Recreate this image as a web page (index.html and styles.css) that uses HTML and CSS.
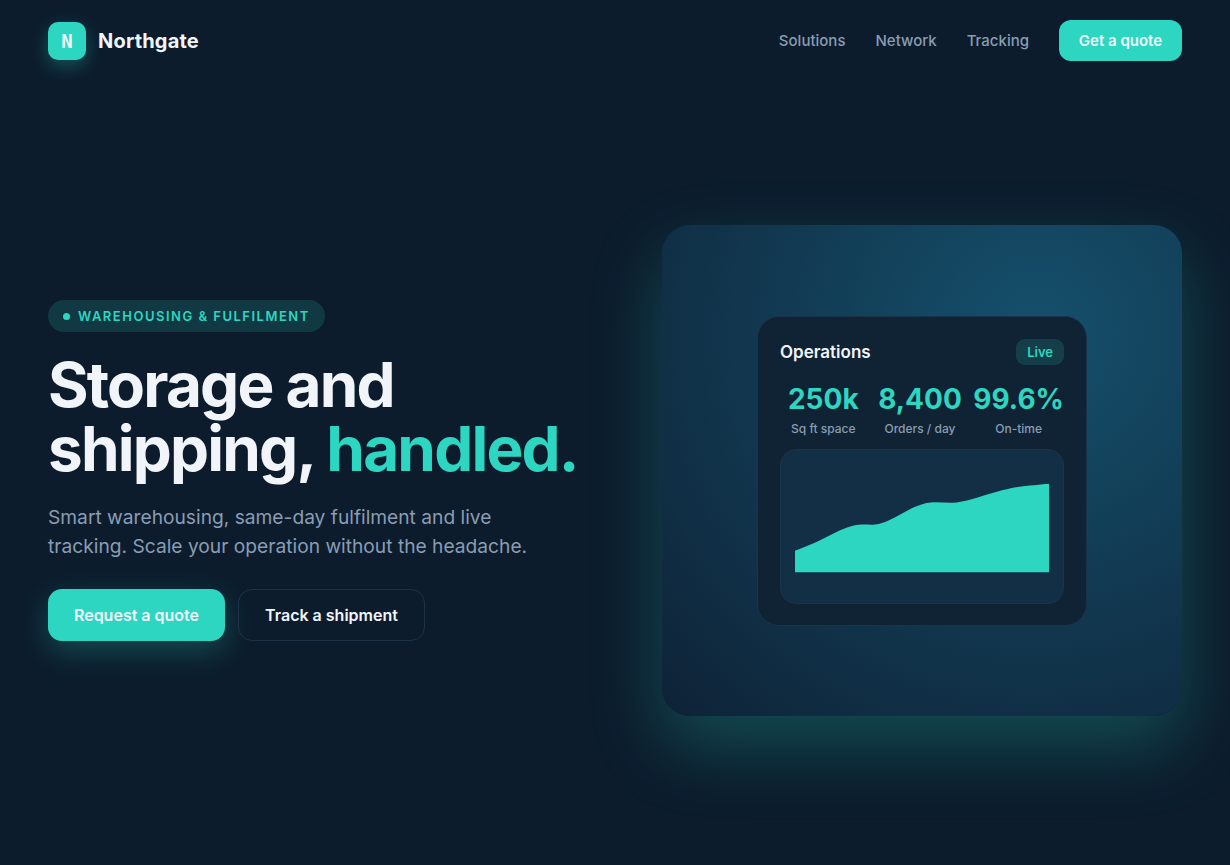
FILE: index.html
```html
<!DOCTYPE html>
<html lang="en">
<head>
  <meta charset="UTF-8" />
  <meta name="viewport" content="width=device-width, initial-scale=1.0"/>
  <title>Northgate - Warehousing &amp; Fulfilment</title>
  <link rel="stylesheet" href="styles.css">
</head>
<body>

<nav class="nav">
  <a href="#" class="brand">
    <span class="brand-mark">N</span>
    <span class="brand-name">Northgate</span>
  </a>
  <div class="nav-links">
    <a href="#" class="nav-link">Solutions</a>
    <a href="#" class="nav-link">Network</a>
    <a href="#" class="nav-link">Tracking</a>
    <a href="#" class="nav-cta">Get a quote</a>
  </div>
</nav>

<main class="hero">
  <section class="hero-copy">
    <div class="eyebrow"><span class="eyebrow-dot"></span>WAREHOUSING &amp; FULFILMENT</div>
    <h1 class="headline">Storage and<br>shipping, <span class="accent">handled.</span></h1>
    <p class="lead">Smart warehousing, same-day fulfilment and live<br>tracking. Scale your operation without the headache.</p>
    <div class="actions">
      <a href="#" class="btn btn-primary">Request a quote</a>
      <a href="#" class="btn btn-ghost">Track a shipment</a>
    </div>
  </section>

  <section class="panel">
    <div class="card">
      <div class="card-head">
        <span class="card-title">Operations</span>
        <span class="live">Live</span>
      </div>
      <div class="stats">
        <div class="stat">
          <div class="stat-value">250k</div>
          <div class="stat-label">Sq ft space</div>
        </div>
        <div class="stat">
          <div class="stat-value">8,400</div>
          <div class="stat-label">Orders / day</div>
        </div>
        <div class="stat">
          <div class="stat-value">99.6%</div>
          <div class="stat-label">On-time</div>
        </div>
      </div>
      <div class="chart">
        <svg class="chart-svg" viewBox="0 0 254 125" width="254" height="125">
          <path d="M0 86.7 C8 83.5 15 81 22 77.7 C32 73 42 67 52 63.5 C58 61.5 62 60.8 67 60.6 C72 60.4 76 60.9 80 60.5 C85 60 89 58.5 93 56.8 C102 52.8 110 47.5 119 43.2 C124 41 130 38.8 136 38.4 C143 37.9 151 39 158 38.7 C163 38.4 168 37.4 173 36.2 C185 33 196 29 208 26 C215 24.3 221 23 228 22.3 C237 21.3 246 20.3 254 19.7 L254 108.3 L0 108.3 Z" fill="#2dd6c1"/>
        </svg>
      </div>
    </div>
  </section>
</main>

</body>
</html>
```

FILE: styles.css
```css
* {
  margin: 0; padding: 0; box-sizing: border-box;
}

body {
  font-family: 'Inter', 'Liberation Sans', sans-serif;
  background: #0c1c2d;
  min-height: 100vh;
  color: #f1f5f9;
  overflow: hidden;
}

a {
  text-decoration: none;
}

.nav {
  display: flex;
  align-items: center;
  justify-content: space-between;
  height: 81px;
  padding: 0 48px;
}

.brand {
  display: flex;
  align-items: center;
  gap: 12px;
}

.brand-mark {
  display: flex;
  align-items: center;
  justify-content: center;
  width: 38px;
  height: 38px;
  border-radius: 10px;
  background: #2dd6c1;
  box-shadow: 0 6px 18px rgba(45, 214, 193, 0.3);
  color: #f1f5f9;
  font-family: 'DejaVu Sans Mono', monospace;
  font-size: 19px;
  font-weight: 700;
}

.brand-name {
  color: #f1f5f9;
  font-size: 20px;
  font-weight: 700;
  letter-spacing: 0.2px;
}

.nav-links {
  display: flex;
  align-items: center;
  gap: 30px;
}

.nav-link {
  color: #8a9db3;
  font-size: 15px;
  font-weight: 500;
}

.nav-cta {
  display: flex;
  align-items: center;
  justify-content: center;
  width: 123px;
  height: 41px;
  border-radius: 12px;
  background: #2dd6c1;
  color: #f1f5f9;
  font-size: 15px;
  font-weight: 600;
}

.hero {
  display: grid;
  grid-template-columns: 1fr 520px;
  gap: 48px;
  align-items: center;
  height: 779px;
  padding: 0 48px;
}

.eyebrow {
  display: inline-flex;
  align-items: center;
  gap: 8px;
  height: 32px;
  padding: 0 15px;
  border-radius: 16px;
  background: rgba(45, 214, 193, 0.16);
  color: #2dd6c1;
  font-size: 13px;
  font-weight: 600;
  letter-spacing: 1.5px;
}

.eyebrow-dot {
  width: 7px;
  height: 7px;
  border-radius: 50%;
  background: #2dd6c1;
}

.headline {
  margin-top: 21px;
  font-size: 62px;
  font-weight: 700;
  line-height: 64px;
  letter-spacing: -1.8px;
}

.accent {
  color: #2dd6c1;
}

.lead {
  margin-top: 22px;
  color: #8a9db3;
  font-size: 19.2px;
  line-height: 29px;
}

.actions {
  display: flex;
  gap: 13px;
  margin-top: 28px;
}

.btn {
  display: flex;
  align-items: center;
  justify-content: center;
  height: 52px;
  border-radius: 14px;
  color: #f1f5f9;
  font-size: 16px;
  font-weight: 600;
}

.btn-primary {
  width: 177px;
  background: #2dd6c1;
  box-shadow: 0 10px 30px rgba(45, 214, 193, 0.25);
}

.btn-ghost {
  width: 187px;
  border: 1px solid #1e3247;
}

.panel {
  display: flex;
  align-items: center;
  justify-content: center;
  height: 491px;
  border-radius: 28px;
  background: radial-gradient(circle at 72% 22%, #15506c 0%, #0e2236 100%);
  box-shadow: 0 30px 70px rgba(45, 214, 193, 0.25);
}

.card {
  width: 330px;
  height: 310px;
  padding: 22px;
  border: 1px solid #1b3348;
  border-radius: 22px;
  background: #102334;
}

.card-head {
  display: flex;
  align-items: center;
  justify-content: space-between;
  height: 26px;
}

.card-title {
  font-size: 17px;
  font-weight: 600;
}

.live {
  display: flex;
  align-items: center;
  height: 26px;
  padding: 0 11px;
  border-radius: 9px;
  background: rgba(45, 214, 193, 0.16);
  color: #2dd6c1;
  font-size: 13px;
  font-weight: 600;
}

.stats {
  display: grid;
  grid-template-columns: repeat(3, 1fr);
  gap: 10px;
  margin-top: 17px;
  text-align: center;
}

.stat-value {
  color: #2dd6c1;
  font-size: 28px;
  font-weight: 700;
  line-height: 34px;
}

.stat-label {
  margin-top: 5px;
  color: #8a9db3;
  font-size: 12px;
  font-weight: 500;
  line-height: 15px;
}

.chart {
  height: 155px;
  margin-top: 13px;
  padding: 14px;
  border: 1px solid #1b3348;
  border-radius: 16px;
  background: #132f45;
}

.chart-svg {
  display: block;
}
```
